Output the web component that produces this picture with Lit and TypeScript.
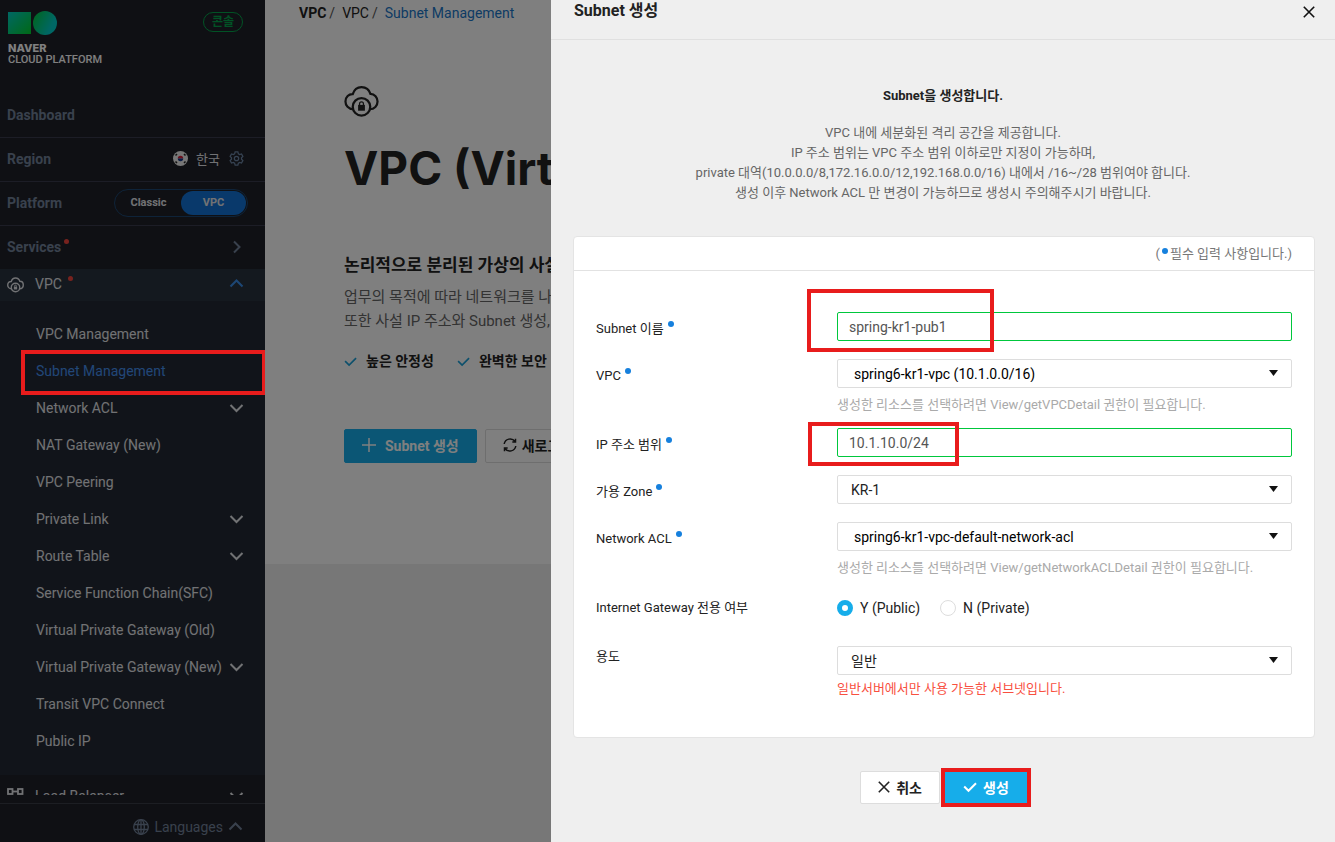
import { LitElement, html, css, nothing } from "lit";
import { customElement, state } from "lit/decorators.js";

const chevron = (dir: "up" | "down" | "right") => {
  const d = {
    up: "M1.5 9.5 7.5 3.5 13.5 9.5",
    down: "M1.5 4 7.5 10 13.5 4",
    right: "M4 1.5 9.500 7 4 12.5",
  }[dir];
  return html`<svg class="chevron" width="15" height="14" viewBox="0 0 15 14" aria-hidden="true"><path d=${d} /></svg>`;
};

const cloudLock = (size: number) => html`<svg class="cloud" width=${size} height=${size} viewBox="0 0 36 36" aria-hidden="true">
  <path d="M9.500 27C4.500 27 1.500 23 1.500 19 1.500 14.500 5 11.200 9 11.500 10.500 6.500 14 4.200 18 4.200 22 4.200 25.800 6.500 27.200 11.200 31.500 11.200 34.500 14.800 34.500 19 34.500 23.500 31.200 27 26.500 27" />
  <circle cx="18" cy="24.500" r="9" />
  <path class="solid" d="M14.500 22.500H21.500V28.500H14.500Z" />
  <path class="shackle" d="M16 22.500V21.300a2 2 0 0 1 4 0V22.500" />
</svg>`;

const check = (w: number) => html`<svg class="check" width=${w} height=${w} viewBox="0 0 14 14" aria-hidden="true"><path d="M1.200 6.500 5.500 10.800 13 3.300" /></svg>`;
const cross = (w: number) => html`<svg class="cross" width=${w} height=${w} viewBox="0 0 12 12" aria-hidden="true"><path d="M.8.8 11.200 11.200M11.200.8.8 11.200" /></svg>`;

const MENU: { label: string; children?: boolean }[] = [
  { label: "VPC Management" },
  { label: "Subnet Management" },
  { label: "Network ACL", children: true },
  { label: "NAT Gateway (New)" },
  { label: "VPC Peering" },
  { label: "Private Link", children: true },
  { label: "Route Table", children: true },
  { label: "Service Function Chain(SFC)" },
  { label: "Virtual Private Gateway (Old)" },
  { label: "Virtual Private Gateway (New)", children: true },
  { label: "Transit VPC Connect" },
  { label: "Public IP" },
];

@customElement("ncp-sidebar")
class NcpSidebar extends LitElement {
  @state() private current = "Subnet Management";

  static styles = css`
    :host { display: flex; flex-direction: column; height: 100vh; background: #1f2129; color: #e2e4e8; font-size: 14px; }
    a { color: inherit; text-decoration: none; }
    svg { display: block; fill: none; flex: none; }
    .chevron { stroke: currentColor; stroke-width: 2; }
    .brand { display: flex; justify-content: space-between; align-items: flex-start; padding: 10px 22px 0 8px; height: 84px; }
    .logo { display: flex; flex-direction: column; color: #fff; font-size: 11px; line-height: 12px; }
    .logo svg { margin-bottom: 7px; }
    .logo b { font-family: Inter, "Noto Sans", sans-serif; font-weight: 800; font-size: 11px; }
    .logo span { font-weight: 500; font-size: 11px; }
    .console { margin-top: 2px; border: 1px solid #03a54b; border-radius: 10px; padding: 0 8px; height: 18px; line-height: 18px; font-size: 12px; font-weight: 700; color: #03a54b; }
    .line { display: flex; align-items: center; justify-content: space-between; height: 41px; padding: 0 20px 2px 7px; border-bottom: 1px solid #383a4c; color: #72829a; font-weight: 700; }
    .line.last { border-bottom: 0; }
    .region { display: flex; align-items: center; gap: 8px; color: #e2e4e8; font-weight: 400; font-size: 13px; }
    .region svg:last-child { margin: 0 1px; }
    .switch { display: flex; border: 1px solid #1c4772; border-radius: 14px; padding: 1px; margin-right: -3px; }
    .switch button { border: 0; background: none; color: #e2e4e8; font: 700 11px Roboto, sans-serif; width: 65px; height: 24px; border-radius: 12px; padding: 0; }
    .switch .on { background: #1273d6; }
    .tag { display: flex; align-items: flex-start; gap: 3px; }
    .tag::after { content: ""; width: 5px; height: 5px; border-radius: 3px; background: #f0453c; }
    .service { display: flex; align-items: center; height: 32px; padding: 0 21px 2px 7px; background: #29333f; box-sizing: border-box; }
    .service .name { flex: 1; margin-left: 11px; }
    .service .tag { gap: 6px; }
    .service .chevron { color: #3a8eea; }
    .service.plain { background: none; height: 44px; }
    .service.plain .chevron { color: inherit; }
    .cloud { stroke: currentColor; stroke-width: 3; }
    .cloud .solid { fill: currentColor; stroke: none; }
    .cloud .shackle { stroke-width: 2; }
    .menu { list-style: none; margin: 0; padding: 15px 0 15px; background: #222934; }
    .menu li { position: relative; display: flex; align-items: center; justify-content: space-between; height: 37px; padding: 0 21px 2px 36px; box-sizing: border-box; }
    .menu .current { color: #448eee; }
    .mark { position: absolute; z-index: 3; inset: -3px -1px -5px 21px; border: 4px solid #e81c1c; pointer-events: none; }
    .scroll { flex: 1; min-height: 0; overflow: clip; }
    .foot { display: flex; align-items: center; justify-content: flex-end; gap: 5px; height: 39px; margin-top: 8px; padding: 8px 22px 0 0; box-sizing: border-box; border-top: 1px solid #383c46; color: #72829a; line-height: 20px; }
    .foot svg { stroke: currentColor; }
  `;

  render() {
    return html`
      <div class="scroll">
        <header class="brand">
          <a class="logo" href="#">
            <svg width="50" height="25" viewBox="0 0 50 25" aria-hidden="true">
              <defs>
                <linearGradient id="a" x1="0" y1="0" x2="1" y2="1"><stop offset="0" stop-color="#00cfc8" /><stop offset="1" stop-color="#00d32c" /></linearGradient>
                <linearGradient id="b" x1="0" y1=".2" x2="1" y2=".7"><stop offset=".1" stop-color="#00cd55" /><stop offset=".8" stop-color="#00cfcb" /></linearGradient>
              </defs>
              <path fill="url(#a)" d="M0 2h23v22H0z" /><circle fill="url(#b)" cx="37" cy="13" r="12" />
            </svg>
            <b>NAVER</b><span>CLOUD PLATFORM</span>
          </a>
          <span class="console">콘솔</span>
        </header>
        <nav>
          <a class="line" href="#">Dashboard</a>
          <div class="line">Region
            <span class="region">
              <svg width="15" height="15" viewBox="0 0 15 15" aria-hidden="true"><circle cx="7.500" cy="7.500" r="7.500" fill="#eee" /><path d="M4.800 7.500a2.700 2.700 0 0 1 5.400 0" fill="#d8203c" /><path d="M4.800 7.500a2.700 2.700 0 0 0 5.400 0" fill="#123a8c" /><path d="M2.500 4.500 4 3M11 3l1.500 1.500M2.500 10.500 4 12M11 12l1.500-1.500" stroke="#222" stroke-width="1.500" /></svg>
              한국
              <svg width="15" height="15" viewBox="0 0 24 24" stroke="#6d86a6" stroke-width="2" aria-hidden="true"><circle cx="12" cy="12" r="3.500" /><path d="M9.800 1.500h4.400l.8 3 2 1.200 3-.9 2.200 3.900-2.200 2.200v2.200l2.200 2.200-2.200 3.900-3-.9-2 1.200-.8 3H9.800l-.8-3-2-1.200-3 .9-2.200-3.900L4 13.100v-2.200L1.800 8.700 4 4.800l3 .9 2-1.200z" /></svg>
            </span>
          </div>
          <div class="line">Platform
            <span class="switch"><button>Classic</button><button class="on">VPC</button></span>
          </div>
          <a class="line last" href="#"><span class="tag">Services</span>${chevron("right")}</a>
          <a class="service" href="#">${cloudLock(17)}<span class="name"><span class="tag">VPC</span></span>${chevron("up")}</a>
        </nav>
        <ul class="menu">
          ${MENU.map((m) => html`<li>
            <a href="#" class=${m.label === this.current ? "current" : ""} @click=${() => (this.current = m.label)}>${m.label}</a>
            ${m.children ? chevron("down") : nothing}
            ${m.label === "Subnet Management" ? html`<span class="mark"></span>` : nothing}
          </li>`)}
        </ul>
        <a class="service plain" href="#">
          <svg width="17" height="16" viewBox="0 0 17 16" stroke="currentColor" stroke-width="1.800" aria-hidden="true"><rect x="1" y="1" width="4.500" height="5" /><rect x="11" y="1" width="4.500" height="5" /><path d="M5.500 3.500h5.500" /></svg>
          <span class="name">Load Balancer</span>${chevron("down")}
        </a>
      </div>
      <footer class="foot">
        <svg width="16" height="16" viewBox="0 0 16 16" stroke-width="1.300" aria-hidden="true"><circle cx="8" cy="8" r="7.300" /><ellipse cx="8" cy="8" rx="3.300" ry="7.300" /><path d="M8 .7v14.600M1 5.500h14M1 10.500h14" /></svg>
        Languages ${chevron("up")}
      </footer>`;
  }
}

@customElement("ncp-overview")
class NcpOverview extends LitElement {
  static styles = css`
    :host { display: block; background: #efefef; color: #222; min-width: 0; overflow: hidden; }
    a { color: inherit; text-decoration: none; }
    svg { fill: none; display: block; flex: none; }
    .page { background: #fff; white-space: nowrap; }
    .crumbs { display: flex; gap: 3px; padding: 3px 0 0 34px; line-height: 20px; font-size: 14px; color: #555; }
    .crumbs a { color: #222; }
    .crumbs span + a { margin-left: 4px; }
    .crumbs .here { color: #1a77c9; }
    .body { padding: 60px 0 101px 79px; }
    .cloud { stroke: #222; stroke-width: 2.300; }
    .cloud .solid { fill: #222; stroke: none; }
    .cloud .shackle { stroke-width: 1.300; }
    h1 { margin: 22px 0 0; font: 700 46px/56px Inter, "Noto Sans", sans-serif; }
    h2 { margin: 57px 0 0; font-size: 17px; line-height: 24px; font-weight: 700; }
    p { margin: 8px 0 0; font-size: 15px; line-height: 24px; color: #666; }
    ul { list-style: none; display: flex; gap: 23px; margin: 17px 0 0; padding: 0; font-size: 14px; line-height: 22px; font-weight: 700; }
    li { display: flex; align-items: center; gap: 9px; }
    .check { stroke: #1aa0d8; stroke-width: 1.800; }
    .actions { display: flex; gap: 8px; margin-top: 57px; }
    button { display: flex; align-items: center; gap: 9px; height: 34px; padding: 0 17px 2px; border: 1px solid #ddd; border-radius: 2px; background: #fff; color: #222; font: 700 14px Roboto, "Noto Sans CJK KR", sans-serif; }
    .primary { background: #16adea; border-color: #16adea; color: #fff; }
    .again { gap: 5px; }
    button svg { stroke: currentColor; }
  `;
  render() {
    return html`<main class="page">
      <nav class="crumbs"><a href="#"><b>VPC</b></a><span>/</span><a href="#">VPC</a><span>/</span><a class="here" href="#">Subnet Management</a></nav>
      <div class="body">
        ${cloudLock(35)}
        <h1>VPC (Virtual Private Cloud)</h1>
        <h2>논리적으로 분리된 가상의 사설 네트워크</h2>
        <p>업무의 목적에 따라 네트워크를 나누고<br />또한 사설 IP 주소와 Subnet 생성,</p>
        <ul><li>${check(13)}높은 안정성</li><li>${check(13)}완벽한 보안</li></ul>
        <div class="actions">
          <button class="primary"><svg width="14" height="14" viewBox="0 0 14 14" stroke-width="1.500" aria-hidden="true"><path d="M7 0v14M0 7h14" /></svg>Subnet 생성</button>
          <button class="again"><svg width="14" height="14" viewBox="0 0 14 14" stroke-width="1.500" aria-hidden="true"><path d="M1.200 6A6 6 0 0 1 12 3.500M12.800 8A6 6 0 0 1 2 10.500M12.500.8v3.200H9.300M1.500 13.200V10h3.200" /></svg>새로고침</button>
        </div>
      </div>
    </main>`;
  }
}

@customElement("subnet-drawer")
class SubnetDrawer extends LitElement {
  static styles = css`
    :host { display: block; background: #efefef; color: #222; font-size: 13px; overflow: hidden; }
    svg { fill: none; display: block; flex: none; }
    .cross, .check { stroke: currentColor; stroke-width: 1.600; }
    .head { display: flex; align-items: center; justify-content: space-between; height: 40px; padding: 0 20px 17px 23px; box-sizing: border-box; border-bottom: 1px solid #e0e0e0; }
    h1 { margin: 0; font-size: 16px; line-height: 22px; font-weight: 700; }
    .head button { border: 0; background: none; padding: 0; margin-top: 2px; color: #111; }
    .intro { text-align: center; padding: 46px 22px 0; line-height: 20px; color: #666; }
    h2 { margin: 0 0 17px; font-size: 13px; line-height: 20px; color: #222; }
    p { margin: 0; }
    .card { margin: 33px 20px 0 22px; background: #fff; border: 1px solid #e4e4e4; border-radius: 4px; }
    .note { height: 33px; line-height: 33px; padding: 0 22px; text-align: right; color: #777; border-bottom: 1px solid #e2e2e2; }
    .note i { display: inline-block; width: 6px; height: 6px; border-radius: 3px; background: #1680dd; vertical-align: 4px; margin: 0 2px; }
    .fields { padding: 41px 22px 22px; }
    .row { display: grid; grid-template-columns: 241px 1fr; align-items: start; min-height: 47px; }
    .tall { min-height: 69px; }
    .choice { min-height: 55px; }
    .label { line-height: 34px; }
    .low { line-height: 22px; }
    .need::after { content: ""; display: inline-block; width: 6px; height: 6px; border-radius: 3px; background: #1680dd; vertical-align: 6px; margin-left: 4px; }
    .control { position: relative; }
    .field { appearance: none; display: block; width: 100%; height: 29px; box-sizing: border-box; border: 1px solid #ddd; border-radius: 2px; background: #fff; color: #222; margin: 0; padding: 0 13px; font: 14px Roboto, "Noto Sans CJK KR", sans-serif; outline: none; }
    .field.valid { border: 1px solid #00c73c; color: #555; padding: 0 11px; }
    .wide { padding-left: 16px; color: #000; }
    .arrow { position: absolute; right: 14px; top: 11px; pointer-events: none; fill: #111; }
    .hint { margin-top: 7px; line-height: 20px; color: #aaa; }
    .warn { margin-top: 4px; line-height: 20px; color: #f8503f; }
    .radios { display: flex; gap: 20px; height: 34px; align-items: center; font-size: 14px; }
    .radios label { display: flex; align-items: center; gap: 7px; }
    .radios input { appearance: none; margin: 0; width: 16px; height: 16px; border-radius: 50%; border: 1px solid #ddd; background: #fff; }
    .radios input:checked { border: 5px solid #16adea; }
    .mark { position: absolute; z-index: 1; border: 4px solid #e81c1c; pointer-events: none; }
    .mark.name { inset: -23px 298px -11px -30px; }
    .mark.range { inset: -6px 333px -9px -29px; }
    .mark.go { inset: -4px; }
    .buttons { display: flex; justify-content: center; gap: 4px; padding: 33px 0 38px 2px; }
    .buttons button { position: relative; display: flex; align-items: center; gap: 6px; height: 33px; padding: 0 17px 2px; border: 1px solid #ddd; border-radius: 2px; background: #fff; color: #222; font: 700 14px Roboto, "Noto Sans CJK KR", sans-serif; }
    .buttons .primary { background: #16adea; border-color: #16adea; color: #fff; padding: 0 18px 2px; }
    .primary .check { stroke-width: 2; }
  `;

  private arrow() {
    return html`<svg class="arrow" width="9" height="6" viewBox="0 0 9 6" aria-hidden="true"><path d="M0 0h9L4.500 6z" /></svg>`;
  }

  render() {
    return html`
      <header class="head"><h1>Subnet 생성</h1><button aria-label="닫기">${cross(12)}</button></header>
      <div class="intro">
        <h2>Subnet을 생성합니다.</h2>
        <p>VPC 내에 세분화된 격리 공간을 제공합니다.<br />IP 주소 범위는 VPC 주소 범위 이하로만 지정이 가능하며,<br />private 대역(10.0.0.0/8,172.16.0.0/12,192.168.0.0/16) 내에서 /16~/28 범위여야 합니다.<br />생성 이후 Network ACL 만 변경이 가능하므로 생성시 주의해주시기 바랍니다.</p>
      </div>
      <form @submit=${(e: Event) => e.preventDefault()}>
        <section class="card">
          <div class="note">(<i></i>필수 입력 사항입니다.)</div>
          <div class="fields">
            <div class="row"><label class="label need" for="name">Subnet 이름</label>
              <div class="control"><input id="name" class="field valid" type="text" .value=${"spring-kr1-pub1"} /><span class="mark name"></span></div></div>
            <div class="row tall"><label class="label need" for="vpc">VPC</label>
              <div class="control"><select id="vpc" class="field wide"><option>spring6-kr1-vpc (10.1.0.0/16)</option></select>${this.arrow()}
                <div class="hint">생성한 리소스를 선택하려면 View/getVPCDetail 권한이 필요합니다.</div></div></div>
            <div class="row"><label class="label need" for="range">IP 주소 범위</label>
              <div class="control"><input id="range" class="field valid" type="text" .value=${"10.1.10.0/24"} /><span class="mark range"></span></div></div>
            <div class="row"><label class="label need" for="zone">가용 Zone</label>
              <div class="control"><select id="zone" class="field"><option>KR-1</option></select>${this.arrow()}</div></div>
            <div class="row tall"><label class="label need" for="acl">Network ACL</label>
              <div class="control"><select id="acl" class="field wide"><option>spring6-kr1-vpc-default-network-acl</option></select>${this.arrow()}
                <div class="hint">생성한 리소스를 선택하려면 View/getNetworkACLDetail 권한이 필요합니다.</div></div></div>
            <div class="row choice" role="radiogroup" aria-labelledby="igw"><span class="label" id="igw">Internet Gateway 전용 여부</span>
              <div class="radios"><label><input type="radio" name="igw" checked />Y (Public)</label><label><input type="radio" name="igw" />N (Private)</label></div></div>
            <div class="row tall"><label class="label low" for="usage">용도</label>
              <div class="control"><select id="usage" class="field"><option>일반</option></select>${this.arrow()}
                <div class="warn">일반서버에서만 사용 가능한 서브넷입니다.</div></div></div>
          </div>
        </section>
        <div class="buttons"><button type="button">${cross(12)}취소</button><button class="primary">${check(14)}생성<span class="mark go"></span></button></div>
      </form>`;
  }
}

@customElement("app-root")
class AppRoot extends LitElement {
  static styles = css`
    :host { display: grid; grid-template-columns: 265px minmax(0, 1fr); height: 100vh; overflow: hidden; font-family: Roboto, "Noto Sans CJK KR", sans-serif; }
    .backdrop { position: fixed; inset: 0; z-index: 1; background: rgba(0, 0, 0, 0.5); }
    .drawer { position: fixed; z-index: 2; top: 0; right: 0; bottom: 0; width: 784px; max-width: 100vw; }
  `;
  render() {
    return html`<ncp-sidebar></ncp-sidebar><ncp-overview></ncp-overview>
      <div class="backdrop"></div>
      <subnet-drawer class="drawer"></subnet-drawer>`;
  }
}
